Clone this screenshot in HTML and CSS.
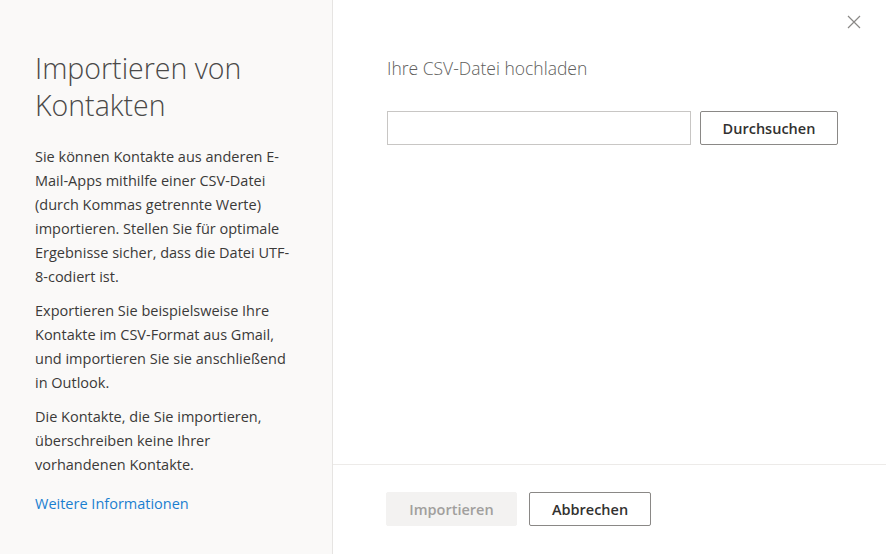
FILE: index.html
```html
<!DOCTYPE html>
<html lang="de">
<head>
    <meta charset="UTF-8">
    <title>Importieren von Kontakten</title>
    <link rel="stylesheet" href="styles.css">
</head>
<body>

    <div class="dialog">
        <!-- Left info panel -->
        <aside class="info">
            <h1>Importieren von Kontakten</h1>
            <p>Sie können Kontakte aus anderen E-Mail-Apps mithilfe einer CSV-Datei (durch Kommas getrennte Werte) importieren. Stellen Sie für optimale Ergebnisse sicher, dass die Datei UTF-8-codiert ist.</p>
            <p>Exportieren Sie beispielsweise Ihre Kontakte im CSV-Format aus Gmail, und importieren Sie sie anschließend in Outlook.</p>
            <p>Die Kontakte, die Sie importieren, überschreiben keine Ihrer vorhandenen Kontakte.</p>
            <a href="#" class="more">Weitere Informationen</a>
        </aside>

        <!-- Right upload panel -->
        <main class="upload">
            <div class="upload-top">
                <button class="close" aria-label="Schließen">
                    <svg width="14" height="14" viewBox="0 0 14 14">
                        <path d="M1 1 L13 13 M13 1 L1 13" stroke="#8a8886" stroke-width="1.2" fill="none"/>
                    </svg>
                </button>
            </div>
            <div class="upload-body">
                <h2>Ihre CSV-Datei hochladen</h2>
                <div class="file-row">
                    <input type="text" class="file-name">
                    <button class="btn">Durchsuchen</button>
                </div>
            </div>
            <div class="upload-footer">
                <button class="btn btn-disabled" disabled>Importieren</button>
                <button class="btn">Abbrechen</button>
            </div>
        </main>
    </div>

</body>
</html>
```

FILE: styles.css
```css
/* Reset */
* {
    margin: 0;
    padding: 0;
    box-sizing: border-box;
}

html, body {
    height: 100%;
    font-family: 'Open Sans', 'Noto Sans', sans-serif;
    color: #323130;
    background: #fff;
}

.dialog {
    display: flex;
    height: 100%;
}

/* Left panel */
.info {
    width: 333px;
    flex-shrink: 0;
    background: #faf9f8;
    border-right: 1px solid #e6e4e2;
    padding: 50px 38px 0 35px;
}

.info h1 {
    font-size: 28.5px;
    font-weight: 300;
    line-height: 37px;
    color: #4a4948;
    margin-bottom: 21px;
}

.info p {
    font-size: 14.5px;
    line-height: 24px;
    color: #3b3a39;
    margin-bottom: 10px;
}

.info .more {
    display: block;
    margin-top: 15px;
    font-size: 14.5px;
    line-height: 24px;
    color: #1a7fd0;
    text-decoration: none;
}

/* Right panel */
.upload {
    flex: 1;
    display: flex;
    flex-direction: column;
}

.upload-top {
    display: flex;
    justify-content: flex-end;
    padding: 15px 25px 0 0;
    height: 56px;
}

.close {
    border: none;
    background: none;
    width: 14px;
    height: 14px;
    cursor: pointer;
}

.upload-body {
    flex: 1;
    padding: 0 0 0 54px;
}

.upload-body h2 {
    font-size: 17.5px;
    font-weight: 300;
    color: #605e5c;
    line-height: 26px;
    margin: -1px 0 30px;
}

.file-row {
    display: flex;
    gap: 9px;
}

.file-name {
    width: 304px;
    height: 34px;
    border: 1px solid #c8c6c4;
    background: #fff;
    outline: none;
}

/* Buttons */
.btn {
    height: 34px;
    padding: 0 18px;
    font-family: inherit;
    font-size: 14.5px;
    font-weight: 600;
    color: #323130;
    background: #fff;
    border: 1px solid #8a8886;
    border-radius: 2px;
    cursor: pointer;
}

.file-row .btn {
    width: 138px;
}

.upload-footer {
    border-top: 1px solid #edebe9;
    height: 90px;
    padding: 27px 0 0 53px;
    display: flex;
    gap: 12px;
}

.upload-footer .btn {
    width: 122px;
}

.upload-footer .btn-disabled {
    width: 131px;
    background: #f3f2f1;
    border-color: #f3f2f1;
    color: #a19f9d;
    cursor: default;
}
```
